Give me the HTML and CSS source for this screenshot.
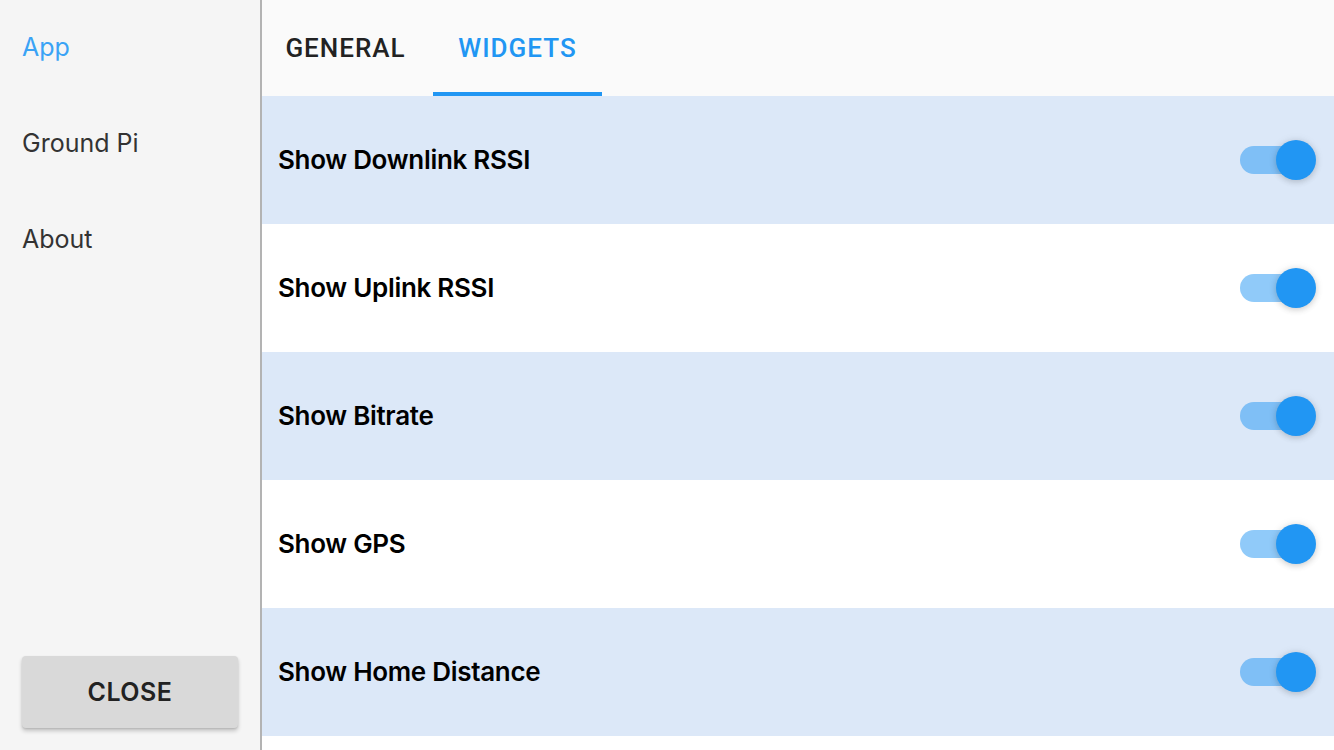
FILE: index.html
```html
<!DOCTYPE html>
<html>
<head>
<meta charset="utf-8">
<link rel="stylesheet" href="styles.css">
</head>
<body>
<div class="app">
  <aside class="sidebar">
    <nav class="nav">
      <div class="nav-item active">App</div>
      <div class="nav-item">Ground Pi</div>
      <div class="nav-item">About</div>
    </nav>
    <button class="close-btn">CLOSE</button>
  </aside>
  <main class="main">
    <header class="tabs">
      <div class="tab first">GENERAL</div>
      <div class="tab active">WIDGETS</div>
    </header>
    <div class="list">
      <div class="row shaded"><span class="label">Show Downlink RSSI</span><span class="switch"><span class="track"></span><span class="thumb"></span></span></div>
      <div class="row"><span class="label">Show Uplink RSSI</span><span class="switch"><span class="track"></span><span class="thumb"></span></span></div>
      <div class="row shaded"><span class="label">Show Bitrate</span><span class="switch"><span class="track"></span><span class="thumb"></span></span></div>
      <div class="row"><span class="label">Show GPS</span><span class="switch"><span class="track"></span><span class="thumb"></span></span></div>
      <div class="row shaded"><span class="label">Show Home Distance</span><span class="switch"><span class="track"></span><span class="thumb"></span></span></div>
      <div class="row"></div>
    </div>
  </main>
</div>
</body>
</html>
```
FILE: styles.css
```css
* { box-sizing: border-box; }
html, body { margin: 0; padding: 0; }
body { width: 1334px; height: 750px; overflow: hidden; background: #fff; }
.app { display: flex; height: 750px; }
.sidebar {
  width: 262px; flex: none;
  background: #f5f5f5;
  border-right: 2px solid #b3b3b3;
  display: flex; flex-direction: column; justify-content: space-between;
  padding: 0 22px 22px 22px;
}
.nav { display: flex; flex-direction: column; }
.nav-item {
  height: 96px; display: flex; align-items: center; padding-bottom: 2px;
  font-family: Inter, sans-serif; font-size: 25px; color: #333;
}
.nav-item.active { color: #3aa3f5; }
.close-btn {
  width: 216px; height: 72px; border: none; border-radius: 4px;
  background: #d9d9d9; color: #222;
  font-family: Inter, sans-serif; font-weight: 600; font-size: 25px; letter-spacing: 0.5px;
  box-shadow: 0 3px 4px rgba(0,0,0,0.2), 0 1px 2px rgba(0,0,0,0.1);
}
.main { flex: 1; display: flex; flex-direction: column; min-width: 0; overflow: hidden; }
.tabs {
  height: 96px; flex: none; background: #fafafa;
  display: flex; align-items: stretch;
}
.tab {
  width: 169px; display: flex; align-items: center; justify-content: center;
  font-family: Roboto, sans-serif; font-weight: 500; font-size: 26px; letter-spacing: 1px; color: #222;
  border-bottom: 4px solid transparent; padding-top: 4px;
}
.tab.first { width: 171px; padding-right: 4px; }
.tab.active { color: #2196f3; border-bottom-color: #2196f3; }
.list { flex: 1; }
.row {
  height: 128px; display: flex; align-items: center; justify-content: space-between;
  padding: 0 18px 0 16px; background: #fff;
}
.row.shaded { background: #dce8f8; }
.label { font-family: Inter, sans-serif; font-weight: 600; font-size: 26px; letter-spacing: -0.3px; color: #000; padding-bottom: 2px; }
.switch { position: relative; width: 76px; height: 40px; display: block; }
.track {
  position: absolute; left: 0; top: 6px; width: 56px; height: 28px; border-radius: 14px;
  background: rgba(33,150,243,0.5);
}
.thumb {
  position: absolute; right: 0; top: 0; width: 40px; height: 40px; border-radius: 50%;
  background: #2196f3;
  box-shadow: 0 2px 6px rgba(0,0,0,0.15), 0 0 10px rgba(0,0,0,0.08);
}
```
